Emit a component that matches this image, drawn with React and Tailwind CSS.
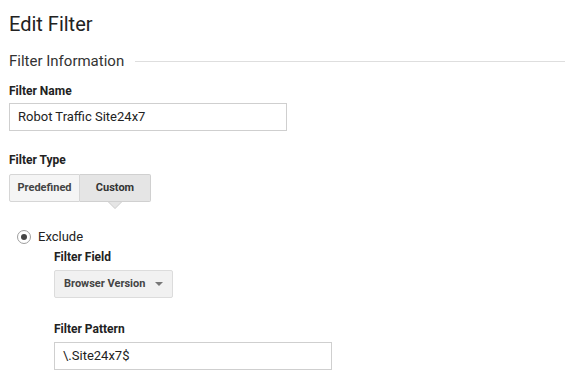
import React from 'react';

const Label = ({ children, className = '' }) => (
  <div className={`text-[12px] leading-[16px] font-bold text-[#222] ${className}`}>{children}</div>
);

const TextBox = ({ value, className = '' }) => (
  <div className={`h-[28px] border border-[#cfcfcf] bg-white flex items-center px-[8px] text-[13px] text-[#222] ${className}`}>
    {value}
  </div>
);

export default function App() {
  return (
    <div className="w-[565px] h-[390px] bg-white pl-[9px] pt-[12px] overflow-hidden" style={{ fontFamily: 'Roboto, "Liberation Sans", sans-serif' }}>
      <h1 className="text-[20px] leading-[24px] text-[#222]">Edit Filter</h1>

      <div className="mt-[15px] flex items-center">
        <div className="text-[15px] leading-[20px] text-[#333]">Filter Information</div>
        <div className="flex-1 h-px bg-[#dedede] ml-[11px] mt-[1px]" />
      </div>

      <Label className="mt-[12px]">Filter Name</Label>
      <TextBox value="Robot Traffic Site24x7" className="mt-[4px] w-[278px]" />

      <Label className="mt-[21px]">Filter Type</Label>
      <div className="mt-[6px] flex">
        <div className="w-[71px] h-[28px] flex items-center justify-center text-[11px] font-bold text-[#444] bg-[#f5f5f5] border border-[#d6d6d6] rounded-l-[2px]">
          Predefined
        </div>
        <div className="relative w-[71px] h-[28px] flex items-center justify-center text-[11px] font-bold text-[#333] bg-[#e5e5e5] border border-l-0 border-[#d0d0d0] rounded-r-[2px]">
          Custom
          <svg className="absolute left-1/2 -translate-x-1/2 top-[27px]" width="14" height="8" viewBox="0 0 14 8">
            <path d="M0 0 L7 7 L14 0 Z" fill="#e5e5e5" />
            <path d="M0.5 0 L7 6.5 L13.5 0" fill="none" stroke="#d0d0d0" strokeWidth="1" />
          </svg>
        </div>
      </div>

      <div className="mt-[27px] flex items-center">
        <div className="ml-[8px] w-[14px] h-[14px] rounded-full border border-[#9e9e9e] flex items-center justify-center">
          <div className="w-[6px] h-[6px] rounded-full bg-[#444]" />
        </div>
        <div className="ml-[7px] text-[13px] leading-[16px] text-[#222]">Exclude</div>
      </div>

      <div className="ml-[45px]">
        <Label className="mt-[4px]">Filter Field</Label>
        <div className="mt-[5px] w-[119px] h-[28px] flex items-center justify-between pl-[9px] pr-[9px] bg-[#f1f1f1] border border-[#dcdcdc] rounded-[2px] text-[11px] font-bold text-[#444]">
          <span>Browser Version</span>
          <svg width="8" height="4" viewBox="0 0 8 4">
            <path d="M0 0 L8 0 L4 4 Z" fill="#777" />
          </svg>
        </div>

        <Label className="mt-[23px]">Filter Pattern</Label>
        <TextBox value="\.Site24x7$" className="mt-[5px] w-[278px]" />
      </div>
    </div>
  );
}
